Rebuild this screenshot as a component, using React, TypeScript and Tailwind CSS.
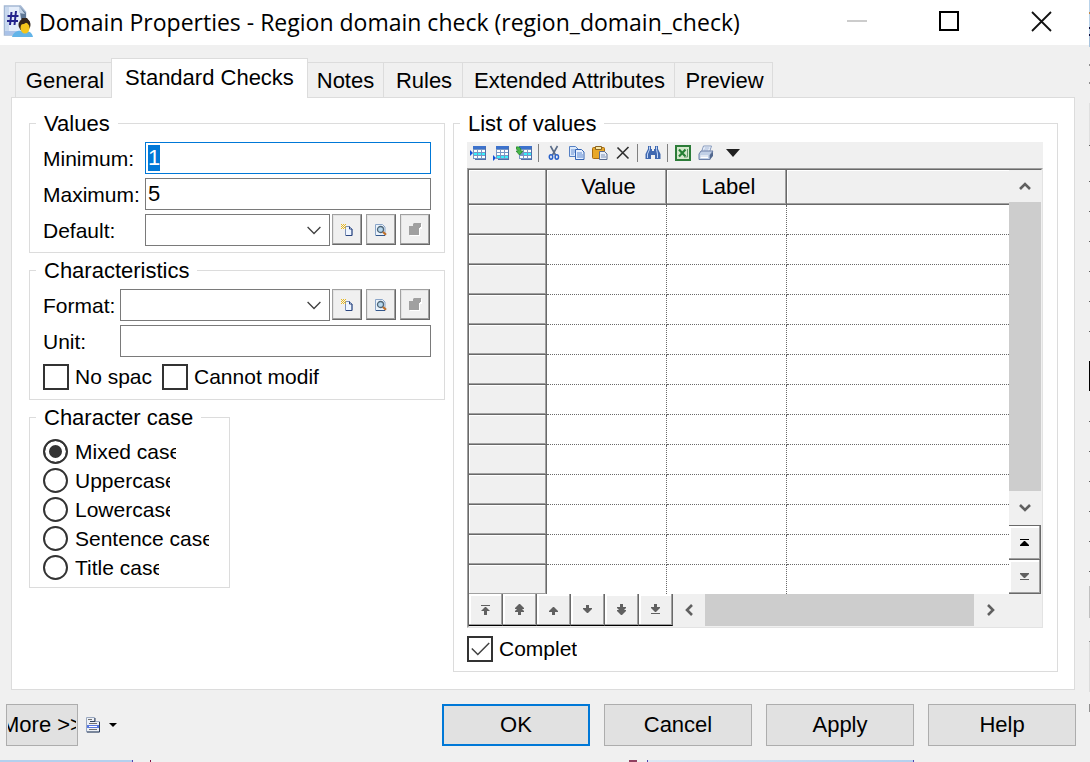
import { useEffect, useRef } from 'react'
import type { ReactNode } from 'react'

const tabs = [
  { label: 'General', className: 'w-[98px]' },
  { label: 'Standard Checks', className: 'w-[197px]' },
  { label: 'Notes', className: 'w-[78px]' },
  { label: 'Rules', className: 'w-[79px]' },
  { label: 'Extended Attributes', className: 'w-[212px]' },
  { label: 'Preview', className: 'w-[98px]' },
]

const cases = [
  { label: 'Mixed case', className: 'w-[101px]' },
  { label: 'Uppercase', className: 'w-[95px]' },
  { label: 'Lowercase', className: 'w-[95px]' },
  { label: 'Sentence case', className: 'w-[134px]' },
  { label: 'Title case', className: 'w-[84px]' },
]

const rowNav = [
  { label: 'First row', path: 'M1 1h9v1H1zM5 3h1l4 4H7v4H4V7H1z' },
  { label: 'Previous page', path: 'M5 0h1l4 4v1H8l2 2v1H7v3H4V8H1V7l2-2H1V4z' },
  { label: 'Previous row', path: 'M5 3h1l4 4v1H7v3H4V8H1V7z' },
  { label: 'Next row', path: 'M4 1h3v3h3v1L6 9H5L1 5V4h3z' },
  { label: 'Next page', path: 'M4 0h3v3h3v1L8 6h2v1l-4 4H5L1 7V6h2L1 4V3h3z' },
  { label: 'Last row', path: 'M4 0h3v3h3v1L6 8H5L1 4V3h3zM1 9h9v1H1z' },
]

// Slivers of the windows behind the dialog: [start, length, colour]
const rightEdge: [number, number, string][] = [
  [0, 12, '#b9d3ea'], [12, 2, '#c08a4a'], [14, 13, '#b9d3ea'], [27, 2, '#101040'], [29, 5, '#b9d3ea'],
  [34, 2, '#101040'], [36, 11, '#a8c4de'], [64, 2, '#909090'], [82, 2, '#909090'], [103, 42, '#e0e0e0'],
  [145, 1, '#606060'], [181, 1, '#606060'], [211, 1, '#606060'], [241, 1, '#606060'], [271, 1, '#606060'],
  [301, 1, '#606060'], [331, 1, '#606060'], [361, 30, '#000000'], [421, 1, '#606060'], [451, 1, '#606060'],
  [481, 1, '#606060'], [511, 1, '#606060'], [541, 1, '#606060'], [571, 1, '#606060'], [586, 32, '#c0c0c0'],
  [641, 1, '#909090'], [642, 50, '#dcdcdc'], [704, 8, '#909090'],
]

const bevel = 'border-[#696969] bg-[#f0f0f0] shadow-[inset_-1px_-1px_#a0a0a0,inset_2px_2px_#ffffff]'

function Group({ title, className, children }: { title: string; className: string; children: ReactNode }) {
  return (
    <fieldset className={`min-w-0 border border-[#dcdcdc] pl-[13px] ${className}`}>
      <legend className="ml-[-7px] px-2 pt-[2px] leading-6">{title}</legend>
      {children}
    </fieldset>
  )
}

function Combo({ id }: { id: string }) {
  return (
    <div className="relative min-w-0 flex-1">
      <select id={id} className="block h-8 w-full appearance-none rounded-none border border-[#7a7a7a] bg-white px-1 outline-none">
        <option></option>
      </select>
      <svg className="pointer-events-none absolute top-3 right-[9px]" width="14" height="9" viewBox="0 0 14 9" fill="none" stroke="#404040" strokeWidth="1.3">
        <path d="M.6 1l6.4 6.5L13.4 1" />
      </svg>
    </div>
  )
}

function FieldLabel({ htmlFor, className, children }: { htmlFor: string; className: string; children: ReactNode }) {
  return (
    <label htmlFor={htmlFor} className={`pt-[2px] text-[21px] leading-6 ${className}`}>
      {children}
    </label>
  )
}

function ToolButton({ label, disabled, children }: { label: string; disabled?: boolean; children: ReactNode }) {
  return (
    <button
      type="button"
      aria-label={label}
      disabled={disabled}
      className="flex h-[31px] w-[30px] items-center justify-center border border-[#a0a0a0] border-r-[#696969] border-b-[#696969] bg-[#f0f0f0] shadow-[inset_-1px_-1px_#a0a0a0,inset_1px_1px_#e3e3e3]"
    >
      {children}
    </button>
  )
}

function ObjectButtons() {
  return (
    <div className="mr-px ml-[2px] flex gap-1 self-start">
      <ToolButton label="Create">
        <svg width="12" height="12" viewBox="0 0 12 12">
          <path d="M4.5 2.5h4l2.5 2.5v6.5H4.5z" fill="#eef5ff" stroke="#7b90b8" />
          <path d="M8.5 2.5V5H11v6.500H5" fill="none" stroke="#2c4680" />
          <path d="M0 0h1v1H0zM2 0h1v1H2zM4 0h1v1H4zM1 1h1v1H1zM3 1h1v1H3zM0 2h1v1H0zM2 2h1v1H2zM4 2h1v1H4zM1 3h1v1H1zM3 3h1v1H3zM0 4h1v1H0zM2 4h1v1H2zM4 4h1v1H4z" fill="#e8b820" />
        </svg>
      </ToolButton>
      <ToolButton label="Properties">
        <svg width="12" height="12" viewBox="0 0 12 12">
          <path d="M.5.5h7L10 3v8.500H.5z" fill="#eaf3fc" stroke="#8aa5c8" />
          <circle cx="5.500" cy="5.500" r="3" fill="#b8d8ee" stroke="#4f6678" strokeWidth="1.300" />
          <path d="M8 8l3 2.800" stroke="#c0702a" strokeWidth="2.200" />
          <path d="M1 11.500h9" stroke="#35588c" />
        </svg>
      </ToolButton>
      <ToolButton label="Select" disabled>
        <svg width="13" height="13" viewBox="0 0 13 13">
          <path d="M1 4h4l2-3h6v5h-2v7H1z" fill="#fff" />
          <path d="M0 3h4V1l1-1h7v4h-1v1h-1v7H0z" fill="#a0a0a0" />
        </svg>
      </ToolButton>
    </div>
  )
}

function Check({ label, clip = '', checked }: { label: string; clip?: string; checked?: boolean }) {
  return (
    <label className="flex items-center text-[21px]">
      <span className="relative mr-[6px] size-[26px]">
        <input type="checkbox" defaultChecked={checked} className="peer block size-[26px] appearance-none border-2 border-[#333333] bg-white" />
        <svg className="pointer-events-none absolute top-[6px] left-1 hidden peer-checked:block" width="19" height="14" viewBox="0 0 19 14" fill="none" stroke="#404040" strokeWidth="1.500">
          <path d="M.8 6.500l6 6L18.200 1" />
        </svg>
      </span>
      <span className={`overflow-hidden leading-[26px] whitespace-nowrap ${clip}`}>{label}</span>
    </label>
  )
}

function TableGlyph() {
  return (
    <g>
      <path d="M3 1h13v13H3z" fill="#7896c4" />
      <path d="M3 1h13v3H3z" fill="#3c72cc" />
      <path d="M4 5h3v2H4zM8 5h3v2H8zM12 5h3v2h-3zM4 11h3v2H4zM8 11h3v2H8zM12 11h3v2h-3z" fill="#fff" />
      <path d="M16 2v13H5v-1h10V2z" fill="#4f6fa8" />
    </g>
  )
}

function Icon({ label, children }: { label: string; children: ReactNode }) {
  return (
    <button type="button" aria-label={label} className="size-4">
      <svg width="16" height="16" viewBox="0 0 16 16">{children}</svg>
    </button>
  )
}

function Separator() {
  return <span className="-ml-px h-[18px] w-px bg-[#808080]" />
}

function Toolbar() {
  return (
    <div className="flex h-[26px] items-center gap-[7px] bg-[#f0f0f0] pb-1 pl-[3px]">
      <Icon label="Insert a row">
        <TableGlyph />
        <path d="M4 8h3v2H4zM8 8h3v2H8zM12 8h3v2h-3z" fill="#38f0fc" />
        <path d="M0 5l3 3-3 3z" fill="#1050d8" />
      </Icon>
      <Icon label="Add a row">
        <TableGlyph />
        <path d="M4 8h3v2H4zM8 8h3v2H8zM12 8h3v2h-3z" fill="#fff" />
        <path d="M4 11h3v2H4zM8 11h3v2H8zM12 11h3v2h-3z" fill="#38f0fc" />
        <path d="M0 10l3 3-3 3z" fill="#1050d8" />
      </Icon>
      <Icon label="Add rows">
        <TableGlyph />
        <path d="M8 8h3v2H8zM12 8h3v2h-3z" fill="#38f0fc" />
        <path d="M0 2q5-1 5 4h2l-3.500 4L0 6h2q0-2-2-2z" fill="#48b848" stroke="#1c7c28" strokeWidth=".7" />
      </Icon>
      <Separator />
      <Icon label="Cut">
        <path d="M4.500 1l5 9M11.500 1l-5 9" stroke="#5a6c88" strokeWidth="1.600" />
        <ellipse cx="5" cy="12" rx="1.700" ry="2.200" fill="none" stroke="#2860c8" strokeWidth="1.500" />
        <ellipse cx="10.800" cy="12" rx="1.700" ry="2.200" fill="none" stroke="#2860c8" strokeWidth="1.500" />
      </Icon>
      <Icon label="Copy">
        <path d="M.5 1.500h6L9 4v7.500H.5z" fill="#dbe9fb" stroke="#5580c4" />
        <path d="M2 5h4M2 7h4M2 9h3" stroke="#6c94d4" />
        <path d="M6.500 4.500h6L15 7v7.500H6.500z" fill="#e6f0fd" stroke="#3364b4" />
        <path d="M8 8h5M8 10h6M8 12h6" stroke="#5c88d0" />
      </Icon>
      <Icon label="Paste">
        <rect x=".5" y="2.500" width="12" height="11" rx="1" fill="#e8a828" stroke="#a86c10" />
        <path d="M3.500 1.500h6v3h-6z" fill="#f8e8a8" stroke="#8a6420" />
        <path d="M7.500 6.500h5L15 9v5.500H7.500z" fill="#e8eef8" stroke="#5a6c90" />
        <path d="M9 10h4M9 12h5" stroke="#8094b8" />
      </Icon>
      <Icon label="Delete">
        <path d="M2.500 2.500l11 11M13.500 2L2 13.500" stroke="#303030" strokeWidth="1.600" />
      </Icon>
      <Separator />
      <Icon label="Find">
        <path d="M3 1h3v3h1v2h2V4h1V1h3v3l2.500 5v5H10v-4H6v4H.5V9L3 4z" fill="#3f68b0" />
        <path d="M4.500 1.500v3L2.500 9v4M11.500 1.500v3l1 4.500v4" stroke="#c0d6f8" fill="none" />
      </Icon>
      <Separator />
      <Icon label="Export to Excel">
        <path d="M1 1h14v14H1z" fill="#d4e8cc" stroke="#2c7c38" strokeWidth="2" />
        <path d="M4 4.500l6.500 7M10.500 4.500L4 11.500" stroke="#258034" strokeWidth="2.200" />
        <path d="M12.500 4v8H9" stroke="#609868" fill="none" />
      </Icon>
      <Icon label="Print">
        <path d="M5.500 1h8l-2 6H3.500z" fill="#f6faff" stroke="#8498bc" />
        <path d="M6.500 3h5M5.500 5h5" stroke="#98acd0" />
        <path d="M1 9l2-3h12l-3 4v4.500H1z" fill="#c0cfe6" stroke="#6c80a8" />
        <path d="M12 10l3-3.500V11l-3 3.500z" fill="#52688e" />
        <path d="M2.500 11h7.500M2.500 12.500h7.500" stroke="#fff" />
      </Icon>
      <button type="button" aria-label="More tools" className="flex h-4 w-6 items-center justify-center">
        <svg width="14" height="8" viewBox="0 0 14 8"><path d="M0 0h14L7 8z" fill="#202020" /></svg>
      </button>
    </div>
  )
}

function ScrollArrow({ label, path, className }: { label: string; path: string; className: string }) {
  return (
    <button type="button" aria-label={label} className={`flex items-center justify-center bg-[#f0f0f0] ${className}`}>
      <svg width="12" height="12" viewBox="0 0 12 12" fill="none" stroke="#606060" strokeWidth="2.600">
        <path d={path} />
      </svg>
    </button>
  )
}

function ValuesGrid() {
  const heading = 'border-r border-b border-[#696969] bg-[#f0f0f0] p-0 text-center font-normal shadow-[inset_-1px_-1px_#a0a0a0,inset_1px_1px_#ffffff]'
  const cell = 'border-r border-b border-dotted border-[#696969] p-0'

  return (
    <div className="border border-[#e3e3e3] border-t-[#a0a0a0] border-l-[#a0a0a0]">
      <div className="border border-[#f0f0f0] border-t-[#696969] border-l-[#696969]">
        <div className="flex">
          <table className="min-w-0 flex-1 table-fixed border-separate border-spacing-0">
            <thead>
              <tr className="h-[35px]">
                <th className={`w-[78px] ${heading}`}></th>
                <th className={`w-[120px] pl-1 ${heading}`}>Value</th>
                <th className={`w-[120px] pl-1 ${heading}`}>Label</th>
                <th className="border-b border-[#696969] bg-[#f0f0f0] p-0 shadow-[inset_0_-1px_#a0a0a0,inset_1px_1px_#ffffff]"></th>
              </tr>
            </thead>
            <tbody>
              {Array.from({ length: 13 }, (_, row) => (
                <tr key={row} className="h-[30px] last:h-[29px] [&:last-child>*]:border-b-0">
                  <th scope="row" className={heading}></th>
                  <td className={cell}></td>
                  <td className={cell}></td>
                  <td className="border-b border-dotted border-[#696969] p-0"></td>
                </tr>
              ))}
            </tbody>
          </table>
          <div className="flex w-8 flex-col">
            <ScrollArrow label="Scroll up" path="M1 9l5-5 5 5" className="h-8" />
            <div className="flex-1 bg-[#cdcdcd]" />
            <ScrollArrow label="Scroll down" path="M1 3l5 5 5-5" className="h-[34px]" />
            <button type="button" aria-label="Top" className={`flex h-[34px] items-center justify-center border-t border-r ${bevel}`}>
              <svg width="9" height="7" viewBox="0 0 9 7"><path d="M0 0h9v1H0zM4 2h1l4 4v1H0V6z" fill="#000" /></svg>
            </button>
            <button type="button" aria-label="Bottom" className={`flex h-[35px] items-center justify-center border-y border-r ${bevel}`}>
              <svg width="9" height="7" viewBox="0 0 9 7"><path d="M0 0h9v1L5 5H4L0 1zM0 6h9v1H0z" fill="#606060" /></svg>
            </button>
          </div>
        </div>
        <div className="flex h-8 bg-[#f0f0f0]">
          {rowNav.map((item) => (
            <button key={item.label} type="button" aria-label={item.label} className={`flex w-[34px] items-center justify-center border-r border-b border-b-black ${bevel}`}>
              <svg width="11" height="11" viewBox="0 0 11 11"><path d={item.path} fill="#606060" /></svg>
            </button>
          ))}
          <ScrollArrow label="Scroll left" path="M9 1L4 6l5 5" className="w-8" />
          <div className="flex-1 bg-[#cdcdcd]" />
          <ScrollArrow label="Scroll right" path="M3 1l5 5-5 5" className="mr-[33px] w-[34px]" />
        </div>
      </div>
    </div>
  )
}

function TitleBar() {
  return (
    <header className="flex h-[45px] items-center bg-white pr-[37px] pl-[3px]">
      <svg width="31" height="33" viewBox="0 0 31 33" className="mb-[3px]">
        <path d="M1.500 1h16l5 6v23h-21z" fill="#e4edfa" stroke="#a4b8d4" strokeWidth="1.500" />
        <path d="M2 2h4v27H2z" fill="#c8d8ee" />
        <path d="M2 26h18v4H2z" fill="#a9c2e8" />
        <path d="M16 1l7 7v10l-5-4z" fill="#5f7896" />
        <path d="M16 1v7l6 1z" fill="#c4d4e8" />
        <path d="M8.500 7L7 20M13 6l-1.500 14M4.500 11h11M4 16h11" stroke="#24248c" strokeWidth="2" />
        <path d="M9 32c1-4 5-7 10-6 6-1 10 1 11 6z" fill="#62b4e8" />
        <ellipse cx="21.500" cy="20" rx="6" ry="6.500" fill="#33261c" />
        <ellipse cx="22" cy="23" rx="4.500" ry="5.500" fill="#f4c61c" />
        <path d="M17 19c4 1 6-1 7-3l2 4 1-3-3-4h-5z" fill="#33261c" />
      </svg>
      <h1 className="ml-[5px] flex-1 truncate pb-[2px] font-['Open_Sans',sans-serif] text-[23px] leading-8">
        Domain Properties - Region domain check (region_domain_check)
      </h1>
      <div className="flex items-center gap-[70px] pb-[3px]">
        <button type="button" aria-label="Minimize" disabled>
          <svg width="22" height="22" viewBox="0 0 22 22"><path d="M1 10h20v2H1z" fill="#cccccc" /></svg>
        </button>
        <button type="button" aria-label="Maximize">
          <svg width="22" height="22" viewBox="0 0 22 22"><path d="M2 2h18v18H2z" fill="none" stroke="#000" strokeWidth="2" /></svg>
        </button>
        <button type="button" aria-label="Close">
          <svg width="22" height="22" viewBox="0 0 22 22"><path d="M2 2l19 19M21 2L2 21" stroke="#111" strokeWidth="1.800" /></svg>
        </button>
      </div>
    </header>
  )
}

function Footer() {
  const button = 'h-[42px] w-[148px] border border-[#adadad] bg-[#e1e1e1]'

  return (
    <footer className="flex items-center justify-between py-[14px] pr-[13px] pl-[6px]">
      <div className="flex items-center">
        <button type="button" className="h-[42px] w-[72px] border border-[#adadad] bg-[#e1e1e1] px-px">
          <span className="flex justify-center overflow-hidden whitespace-nowrap">More &gt;&gt;</span>
        </button>
        <button type="button" aria-label="Menu" className="ml-2 flex items-center gap-2">
          <svg width="15" height="16" viewBox="0 0 15 16">
            <path d="M.5.500h8v4h5v10.500H.5z" fill="#eef1f6" stroke="#9aa8c0" />
            <path d="M9 1v3.500h-5M13.500 5v10H1" fill="none" stroke="#30405c" />
            <path d="M2 2.500h4M3 6.500h8M3 12.500h8" stroke="#707070" />
            <path d="M1 8h12v3H1z" fill="#5878e0" />
            <path d="M3 9.500h8" stroke="#fff" />
          </svg>
          <svg width="8" height="4" viewBox="0 0 8 4"><path d="M0 0h8L4 4z" fill="#000" /></svg>
        </button>
      </div>
      <div className="flex gap-[14px]">
        <button type="submit" className="h-[42px] w-[148px] border-2 border-[#0078d7] bg-[#e1e1e1]">OK</button>
        <button type="button" className={button}>Cancel</button>
        <button type="button" className={button}>Apply</button>
        <button type="button" className={button}>Help</button>
      </div>
    </footer>
  )
}

export default function App() {
  const minimum = useRef<HTMLInputElement>(null)

  useEffect(() => {
    minimum.current?.focus()
    minimum.current?.select()
  }, [])

  const input = "h-8 min-w-0 flex-1 border bg-white px-[2px] outline-none selection:bg-[#0078d7] selection:text-white"

  return (
    <div className="flex min-h-screen bg-[#f0f0f0] font-['Liberation_Sans',Arial,sans-serif] text-[22px] leading-6 text-black">
      <form className="flex min-w-0 flex-1 flex-col" onSubmit={(e) => e.preventDefault()}>
        <TitleBar />

        <div role="tablist" className="mt-[13px] flex items-end pl-[15px]">
          {tabs.map((tab, i) => (
            <button
              key={tab.label}
              type="button"
              role="tab"
              aria-selected={i === 1}
              className={
                i === 1
                  ? `relative -mx-[2px] -mb-px h-10 border border-b-0 border-[#dcdcdc] bg-white pb-[2px] ${tab.className}`
                  : `h-[35px] border-t border-r border-[#dcdcdc] bg-[#f0f0f0] pt-[2px] pl-[2px] first:border-l ${tab.className}`
              }
            >
              {tab.label}
            </button>
          ))}
        </div>

        <main className="mr-[14px] ml-[11px] flex flex-1 items-start gap-2 border border-[#dcdcdc] bg-white pt-3 pr-4 pb-[17px] pl-[17px]">
          <div className="flex w-[416px] shrink-0 flex-col gap-1">
            <Group title="Values" className="pt-[6px] pr-[13px] pb-[6px]">
              <div className="flex flex-col gap-1">
                <div className="flex items-center">
                  <FieldLabel htmlFor="minimum" className="w-[102px]">Minimum:</FieldLabel>
                  <input id="minimum" ref={minimum} defaultValue="1" className={`${input} border-[#0078d7]`} />
                </div>
                <div className="flex items-center">
                  <FieldLabel htmlFor="maximum" className="w-[102px]">Maximum:</FieldLabel>
                  <input id="maximum" defaultValue="5" className={`${input} border-[#7a7a7a]`} />
                </div>
                <div className="flex items-center">
                  <FieldLabel htmlFor="default" className="w-[102px]">Default:</FieldLabel>
                  <Combo id="default" />
                  <ObjectButtons />
                </div>
              </div>
            </Group>

            <Group title="Characteristics" className="pt-[6px] pr-[13px] pb-[9px]">
              <div className="flex flex-col gap-1">
                <div className="flex items-center">
                  <FieldLabel htmlFor="format" className="w-[77px]">Format:</FieldLabel>
                  <Combo id="format" />
                  <ObjectButtons />
                </div>
                <div className="flex items-center">
                  <FieldLabel htmlFor="unit" className="w-[77px]">Unit:</FieldLabel>
                  <input id="unit" className={`${input} border-[#7a7a7a]`} />
                </div>
              </div>
              <div className="mt-[7px] flex gap-2">
                <Check label="No spac" clip="w-[79px]" />
                <Check label="Cannot modif" clip="w-[126px]" />
              </div>
            </Group>

            <Group title="Character case" className="w-[201px] pt-[7px] pr-[13px] pb-[5px]">
              {cases.map((item, i) => (
                <label key={item.label} className="flex h-[29px] items-center gap-[7px] text-[21px]">
                  <input
                    type="radio"
                    name="case"
                    defaultChecked={i === 0}
                    className="size-[25px] shrink-0 appearance-none rounded-full border-2 border-[#333333] bg-white checked:bg-[#333333] checked:shadow-[inset_0_0_0_4px_#ffffff]"
                  />
                  <span className={`overflow-hidden pt-px whitespace-nowrap ${item.className}`}>{item.label}</span>
                </label>
              ))}
            </Group>
          </div>

          <Group title="List of values" className="flex-1 pt-[6px] pr-[14px] pb-[9px]">
            <Toolbar />
            <ValuesGrid />
            <div className="mt-2">
              <Check label="Complet" checked />
            </div>
          </Group>
        </main>

        <Footer />

        <div className="flex h-[2px]">
          <span className="w-[132px] bg-[#b4d0ee]" />
          <span className="w-px bg-[#5040b0]" />
          <span className="ml-[17px] w-px bg-[#801040]" />
          <span className="ml-[478px] w-2 bg-[#904060]" />
          <span className="ml-[10px] w-px bg-[#5040b0]" />
          <span className="w-[265px] bg-linear-to-r from-[#dce8f4] to-[#b4d0ee]" />
          <span className="w-px bg-[#5040b0]" />
        </div>
      </form>

      <div className="relative w-px">
        {rightEdge.map(([top, height, color]) => (
          <span key={top} className="absolute left-0 w-px" style={{ top, height, backgroundColor: color }} />
        ))}
      </div>
    </div>
  )
}
